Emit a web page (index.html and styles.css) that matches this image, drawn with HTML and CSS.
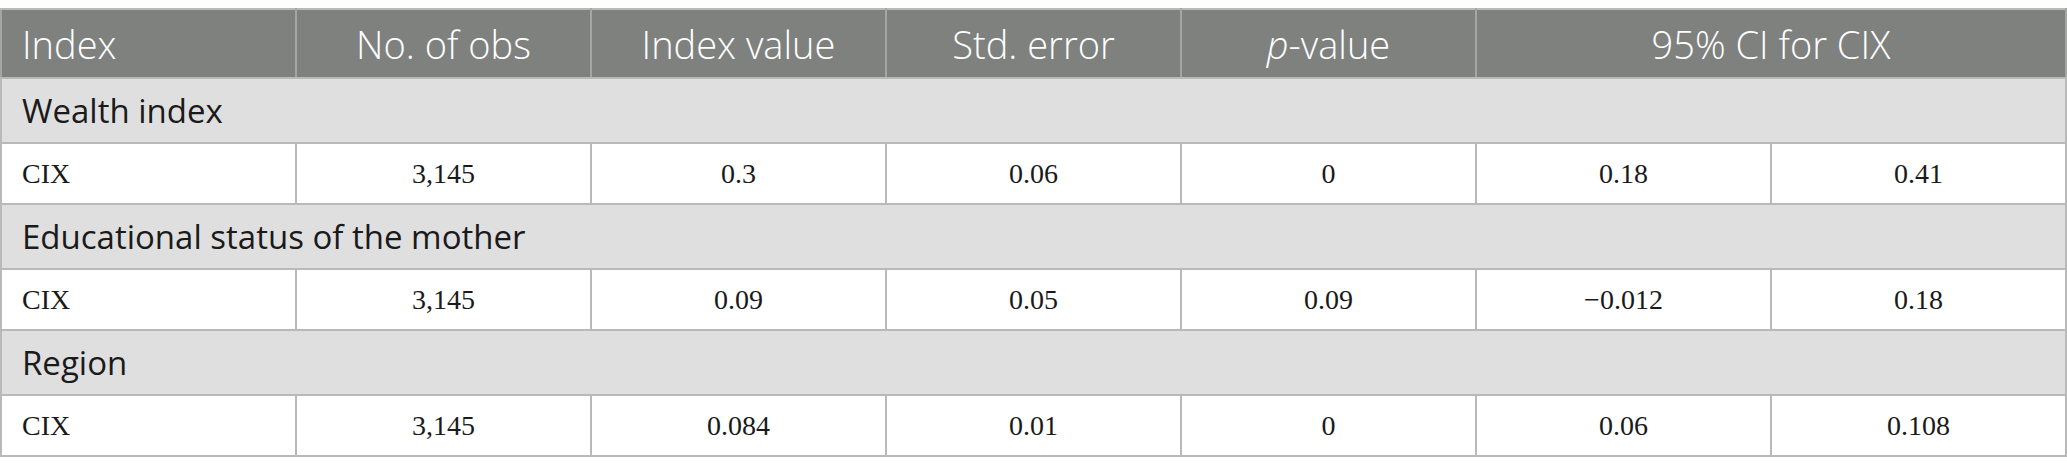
FILE: index.html
```html
<!DOCTYPE html>
<html lang="en">
<head>
<meta charset="utf-8">
<title>CIX table</title>
<link rel="stylesheet" href="styles.css">
</head>
<body>
<table class="tbl">
  <colgroup>
    <col><col><col><col><col><col><col>
  </colgroup>
  <thead>
    <tr class="head">
      <th class="first">Index</th>
      <th>No. of obs</th>
      <th>Index value</th>
      <th>Std. error</th>
      <th><i>p</i>-value</th>
      <th colspan="2">95% CI for CIX</th>
    </tr>
  </thead>
  <tbody>
    <tr class="group"><td colspan="7">Wealth index</td></tr>
    <tr class="data">
      <td class="first">CIX</td><td>3,145</td><td>0.3</td><td>0.06</td><td>0</td><td>0.18</td><td>0.41</td>
    </tr>
    <tr class="group"><td colspan="7">Educational status of the mother</td></tr>
    <tr class="data">
      <td class="first">CIX</td><td>3,145</td><td>0.09</td><td>0.05</td><td>0.09</td><td>&minus;0.012</td><td>0.18</td>
    </tr>
    <tr class="group"><td colspan="7">Region</td></tr>
    <tr class="data">
      <td class="first">CIX</td><td>3,145</td><td>0.084</td><td>0.01</td><td>0</td><td>0.06</td><td>0.108</td>
    </tr>
  </tbody>
</table>
</body>
</html>
```

FILE: styles.css
```css
html, body {
  margin: 0;
  padding: 0;
  background: #ffffff;
}
body {
  padding-top: 8px;
}
.tbl {
  width: 2067px;
  border-collapse: collapse;
  table-layout: fixed;
}
.tbl th, .tbl td {
  border: 2px solid #b9b9b9;
  padding: 0 20px;
  text-align: center;
  vertical-align: middle;
  white-space: nowrap;
}
.head th {
  height: 67px;
  background: #7f817f;
  color: #ffffff;
  font-family: "Open Sans", "Noto Sans", sans-serif;
  font-weight: 300;
  font-size: 38px;
  border-left-color: #a4a6a4;
  border-right-color: #a4a6a4;
}
.head th i {
  font-style: italic;
}
.group td {
  height: 63px;
  background: #e0dfe0;
  color: #1a1a1a;
  font-family: "Open Sans", "Noto Sans", sans-serif;
  font-size: 33px;
  text-align: left;
}
.data td {
  height: 59px;
  background: #ffffff;
  color: #1a1a1a;
  font-family: "Liberation Serif", "Times New Roman", serif;
  font-size: 28px;
}
.tbl .first {
  text-align: left;
}
```
